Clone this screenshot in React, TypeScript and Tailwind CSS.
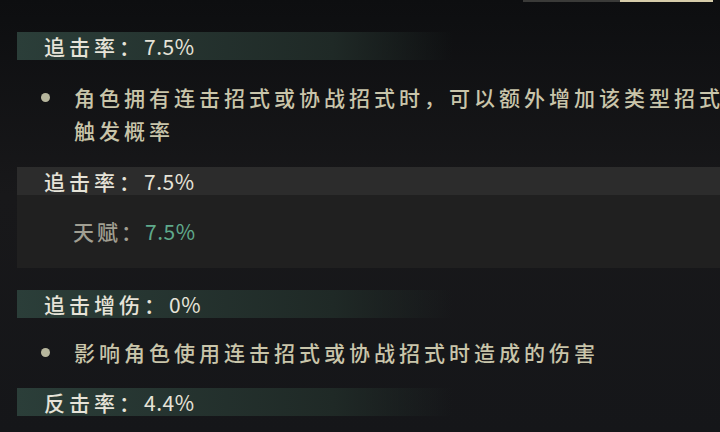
const font = { fontFamily: '"Noto Sans CJK SC", "Noto Sans", sans-serif' };

function StatHeader({ label, value, tone = "teal" }: { label: string; value: string; tone?: "teal" | "gray" }) {
  const bg =
    tone === "teal"
      ? "bg-gradient-to-r from-[#2b3e39] via-[#1f2926] via-45% to-transparent to-[62%]"
      : "bg-[#2c2c2c]";
  return (
    <div className={`h-[28px] flex items-center pl-[27px] ${bg}`}>
      <span className="text-[21px] font-medium leading-none tracking-[4px] text-[#e6e3d8]">{label}</span>
      <span className="text-[21px] leading-none tracking-[0.5px] text-[#e6e3d8]">{value}</span>
    </div>
  );
}

function Bullet({ lines }: { lines: string[] }) {
  return (
    <div className="flex items-start">
      <div className="w-[57px] h-[33px] flex items-center justify-center shrink-0">
        <span className="block w-[9px] h-[9px] rounded-full bg-[#b7b69d]" />
      </div>
      <p className="text-[21px] font-medium leading-[33px] tracking-[4px] text-[#c9c5aa] whitespace-nowrap">
        {lines.map((l, i) => (
          <span key={i} className="block">
            {l}
          </span>
        ))}
      </p>
    </div>
  );
}

export default function App() {
  return (
    <div
      className="w-[720px] h-[432px] overflow-hidden bg-gradient-to-b from-[#0d0e10] via-[#18181a] via-45% to-[#151619]"
      style={font}
    >
      {/* scroll indicator along the top edge */}
      <div className="flex h-[2px]">
        <div className="w-[523px]" />
        <div className="w-[97px] bg-[#3a3a38]" />
        <div className="w-[93px] bg-[#d6ccaa]" />
      </div>

      <div className="pl-[17px] pt-[30px]">
        <StatHeader label="追击率：" value="7.5%" />
        <div className="pt-[21px] pb-[20px]">
          <Bullet lines={["角色拥有连击招式或协战招式时，可以额外增加该类型招式", "触发概率"]} />
        </div>

        <StatHeader label="追击率：" value="7.5%" tone="gray" />
        <div className="bg-[#202020] h-[73px] flex items-center pl-[56px]">
          <span className="text-[21px] font-medium tracking-[3px] text-[#a19f92]">天赋：</span>
          <span className="text-[21px] tracking-[0.5px] text-[#5fa98b]">7.5%</span>
        </div>

        <div className="h-[22px]" />
        <StatHeader label="追击增伤：" value="0%" />
        <div className="pt-[18px] pb-[19px]">
          <Bullet lines={["影响角色使用连击招式或协战招式时造成的伤害"]} />
        </div>

        <StatHeader label="反击率：" value="4.4%" />
      </div>
    </div>
  );
}
